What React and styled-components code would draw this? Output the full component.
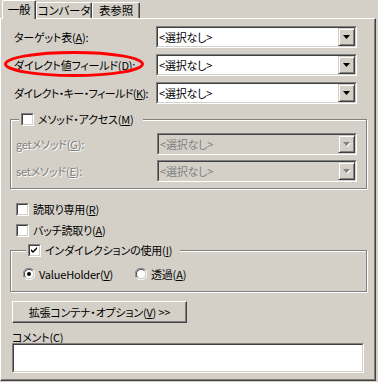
import React from 'react';
import styled, { createGlobalStyle } from 'styled-components';

const BG = '#d4d0c8';

const GlobalStyle = createGlobalStyle`
  html, body {
    margin: 0;
    padding: 0;
    background: ${BG};
  }
`;

const Screen = styled.div`
  position: relative;
  width: 378px;
  height: 382px;
  overflow: hidden;
  background: ${BG};
  font-family: "Noto Sans CJK JP", "Liberation Sans", sans-serif;
  font-size: 11px;
  line-height: 13px;
  letter-spacing: -0.2px;
  font-feature-settings: "palt";
  text-autospace: no-autospace;
  color: #000;
`;

const TabStrip = styled.div`
  display: flex;
  align-items: flex-end;
  height: 18px;
  padding-left: 2px;
  position: relative;
  z-index: 2;
`;

const Tab = styled.div`
  box-sizing: border-box;
  width: ${(p) => p.$w}px;
  height: ${(p) => (p.$active ? 19 : 16)}px;
  margin-bottom: ${(p) => (p.$active ? -1 : 0)}px;
  display: flex;
  align-items: center;
  justify-content: center;
  padding-bottom: ${(p) => (p.$active ? 2 : 0)}px;
  font-size: 11.5px;
  background: ${BG};
  border-left: 1px solid #fff;
  border-top: 1px solid #fff;
  border-right: 1px solid #404040;
  box-shadow: inset -1px 0 0 #808080;
  border-radius: 2px 2px 0 0;
  white-space: nowrap;
`;

const Panel = styled.div`
  box-sizing: border-box;
  width: 376px;
  height: 363px;
  border-top: 1px solid #fff;
  border-left: 1px solid #fff;
  border-right: 1px solid #404040;
  border-bottom: 1px solid #404040;
  box-shadow: inset -1px -1px 0 #808080;
  padding: 7px 0 0 9px;
  display: flex;
  flex-direction: column;
`;

const FieldGrid = styled.div`
  display: grid;
  grid-template-columns: 142px 201px;
  grid-auto-rows: 22px;
  row-gap: 6px;
  margin-left: 4px;
  align-items: center;
`;

const Label = styled.span`
  white-space: nowrap;
  letter-spacing: ${(p) => (p.$tight ? '-0.6px' : 'inherit')};
  color: ${(p) => (p.$disabled ? '#808080' : '#000')};
  text-shadow: ${(p) => (p.$disabled ? '1px 1px 0 #fff' : 'none')};
`;

const ComboOuter = styled.div`
  box-sizing: border-box;
  width: ${(p) => p.$w || 201}px;
  height: 22px;
  border: 1px solid;
  border-color: #808080 #fff #fff #808080;
`;

const ComboInner = styled.div`
  box-sizing: border-box;
  height: 100%;
  display: flex;
  align-items: center;
  border: 1px solid;
  border-color: #404040 ${BG} ${BG} #404040;
  background: ${(p) => (p.$disabled ? BG : '#fff')};
`;

const ComboText = styled.span`
  flex: 1;
  padding-left: 1px;
  white-space: nowrap;
  color: ${(p) => (p.$disabled ? '#808080' : '#000')};
`;

const DropButton = styled.div`
  box-sizing: border-box;
  width: 17px;
  height: 18px;
  display: flex;
  align-items: center;
  justify-content: center;
  background: ${BG};
  border: 1px solid;
  border-color: ${BG} #404040 #404040 ${BG};
  box-shadow: inset 1px 1px 0 #fff, inset -1px -1px 0 #808080;
`;

const Group = styled.fieldset`
  box-sizing: border-box;
  width: 357px;
  margin: ${(p) => p.$mt || 0}px 0 0 0;
  padding: ${(p) => p.$pad};
  min-width: 0;
  border: 1px solid #808080;
  box-shadow: inset 1px 1px 0 #fff, 1px 1px 0 #fff;
`;

const Legend = styled.legend`
  display: flex;
  align-items: center;
  gap: 4px;
  height: 13px;
  margin-left: 3px;
  padding: 0 ${(p) => p.$padR}px 0 2px;
  background: ${BG};
  white-space: nowrap;
`;

const GroupRows = styled.div`
  display: grid;
  grid-template-columns: 141px 200px;
  grid-auto-rows: 22px;
  row-gap: 5px;
  align-items: center;
`;

const CheckRow = styled.label`
  display: flex;
  align-items: center;
  gap: 4px;
  height: 13px;
  margin-left: 6px;
  margin-top: ${(p) => p.$mt}px;
  white-space: nowrap;
`;

const Box = styled.span`
  box-sizing: border-box;
  width: 13px;
  height: 13px;
  flex: none;
  display: flex;
  border: 1px solid;
  border-color: #808080 #fff #fff #808080;
`;

const BoxInner = styled.span`
  box-sizing: border-box;
  flex: 1;
  display: flex;
  align-items: center;
  justify-content: center;
  border: 1px solid;
  border-color: #404040 ${BG} ${BG} #404040;
  background: #fff;
`;

const RadioRow = styled.div`
  display: flex;
  align-items: center;
  height: 14px;
`;

const RadioOption = styled.label`
  display: flex;
  align-items: center;
  gap: 4px;
  width: ${(p) => p.$w}px;
  white-space: nowrap;
`;

const Button = styled.div`
  box-sizing: border-box;
  width: 175px;
  height: 22px;
  margin: 9px 0 0 2px;
  display: flex;
  align-items: center;
  justify-content: center;
  border: 1px solid;
  border-color: #fff #404040 #404040 #fff;
  box-shadow: inset -1px -1px 0 #808080;
  white-space: nowrap;
`;

const CommentLabel = styled.div`
  margin: 8px 0 0 2px;
  height: 12px;
  line-height: 12px;
`;

const TextArea = styled.div`
  box-sizing: border-box;
  width: 352px;
  height: 30px;
  margin: 0 0 0 2px;
  border: 1px solid;
  border-color: #808080 #fff #fff #808080;
  &::after {
    content: '';
    display: block;
    box-sizing: border-box;
    height: 100%;
    border: 1px solid;
    border-color: #404040 ${BG} ${BG} #404040;
    background: #fff;
  }
`;

const Annotation = styled.svg`
  position: absolute;
  left: 3px;
  top: 50px;
  pointer-events: none;
`;

const Arrow = ({ disabled }) => (
  <svg width="8" height="5" viewBox="0 0 8 5">
    {disabled && <polygon points="1,1 8,1 4.5,5" fill="#fff" />}
    <polygon points="0,0 7,0 3.5,4" fill={disabled ? '#808080' : '#000'} />
  </svg>
);

const Combo = ({ disabled, w }) => (
  <ComboOuter $w={w}>
    <ComboInner $disabled={disabled}>
      <ComboText $disabled={disabled}>&lt;選択なし&gt;</ComboText>
      <DropButton>
        <Arrow disabled={disabled} />
      </DropButton>
    </ComboInner>
  </ComboOuter>
);

const Check = ({ checked }) => (
  <Box>
    <BoxInner>
      {checked && (
        <svg width="7" height="7" viewBox="0 0 7 7">
          <path d="M0 2 L2 4 L6 0 L6 2 L2 6 L0 4 Z" fill="#000" />
        </svg>
      )}
    </BoxInner>
  </Box>
);

const Radio = ({ checked }) => (
  <svg width="12" height="12" viewBox="0 0 12 12">
    <path d="M10.5 2.2 A5.5 5.5 0 0 0 1.5 9.8" stroke="#808080" fill="none" />
    <path d="M1.5 9.8 A5.5 5.5 0 0 0 10.5 2.2" stroke="#fff" fill="none" />
    <circle cx="6" cy="6" r="4.5" fill="#fff" />
    <path d="M9.3 2.7 A4.5 4.5 0 0 0 2.7 9.3" stroke="#404040" fill="none" />
    <path d="M2.7 9.3 A4.5 4.5 0 0 0 9.3 2.7" stroke={BG} fill="none" />
    {checked && <circle cx="6" cy="6" r="2" fill="#000" />}
  </svg>
);

const App = () => (
  <Screen>
    <GlobalStyle />
    <TabStrip>
      <Tab $active $w={34}>一般</Tab>
      <Tab $w={56}>コンバータ</Tab>
      <Tab $w={48}>表参照</Tab>
    </TabStrip>
    <Panel>
      <FieldGrid>
        <Label>ターゲット表(<u>A</u>):</Label>
        <Combo />
        <Label>ダイレクト値フィールド(<u>D</u>):</Label>
        <Combo />
        <Label $tight>ダイレクト・キー・フィールド(<u>K</u>):</Label>
        <Combo />
      </FieldGrid>

      <Group $mt={9} $pad="7px 9px 6px 5px">
        <Legend $padR={10}>
          <Check />
          <span>メソッド・アクセス(<u>M</u>)</span>
        </Legend>
        <GroupRows>
          <Label $disabled>getメソッド(<u>G</u>):</Label>
          <Combo disabled w={200} />
          <Label $disabled>setメソッド(<u>E</u>):</Label>
          <Combo disabled w={200} />
        </GroupRows>
      </Group>

      <CheckRow $mt={14}>
        <Check />
        <span>読取り専用(<u>R</u>)</span>
      </CheckRow>
      <CheckRow $mt={8}>
        <Check />
        <span>バッチ読取り(<u>A</u>)</span>
      </CheckRow>

      <Group $mt={7} $pad="10px 9px 10px 12px">
        <Legend $padR={8}>
          <Check checked />
          <span>インダイレクションの使用(<u>I</u>)</span>
        </Legend>
        <RadioRow>
          <RadioOption $w={112}>
            <Radio checked />
            <span>ValueHolder(<u>V</u>)</span>
          </RadioOption>
          <RadioOption $w={80}>
            <Radio />
            <span>透過(<u>A</u>)</span>
          </RadioOption>
        </RadioRow>
      </Group>

      <Button>
        <span>拡張コンテナ・オプション(<u>V</u>) &gt;&gt;</span>
      </Button>
      <CommentLabel>コメント(<u>C</u>)</CommentLabel>
      <TextArea />
    </Panel>

    <Annotation width="142" height="28" viewBox="0 0 142 28">
      <ellipse cx="71" cy="14" rx="68.5" ry="11.5" fill="none" stroke="#ff0000" strokeWidth="3" />
    </Annotation>
  </Screen>
);

export default App;
